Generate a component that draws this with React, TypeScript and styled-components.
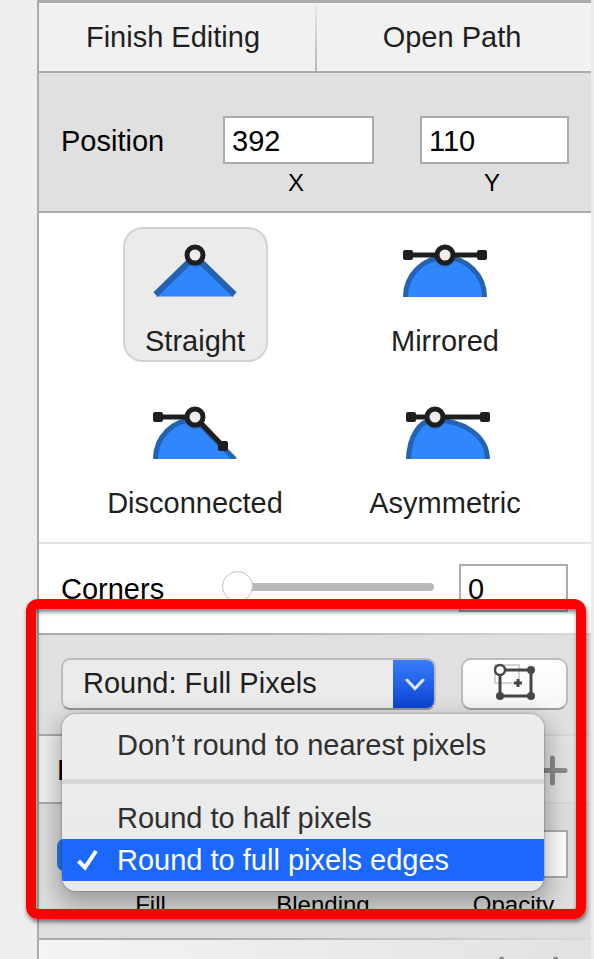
import React, { useState } from 'react';
import styled, { createGlobalStyle } from 'styled-components';

const ink = '#1f1f1f';
const rule = '#ababab';
const gray = '#e0e0e0';

const GlobalStyle = createGlobalStyle`
  *, *::before, *::after { box-sizing: border-box; }
  body {
    margin: 0;
    background: #eeeeee;
    font-family: "Liberation Sans", Arial, Helvetica, sans-serif;
    font-size: 29px;
    line-height: 34px;
    color: #000;
  }
  button, input { font: inherit; color: inherit; }
`;

const Page = styled.div`
  position: relative;
  height: 100vh;
  overflow: hidden;
  display: flex;
  padding-left: 37px;
`;

const Panel = styled.main`
  flex: 1;
  min-width: 0;
  display: flex;
  flex-direction: column;
  border-left: 2px solid ${rule};
  border-right: 3px solid #ebebeb;
`;

const Section = styled.section<{ $bg: string; $line?: string; $fade?: boolean }>`
  flex: none;
  background: ${p => p.$bg};
  border-bottom: 2px solid ${p => p.$line ?? rule};
  ${p => p.$fade && `border-image: linear-gradient(90deg, ${rule} 30%, #dadada) 1;`}
`;

const Tabs = styled(Section)`
  display: grid;
  grid-template-columns: 1fr 1fr;
  border-top: 3px solid ${rule};
`;

const TabButton = styled.button`
  height: 68px;
  padding: 0 8px 0 0;
  border: 0;
  background: none;
  color: ${ink};
  & + & {
    padding: 0 4px 0 0;
    border-left: 2px solid;
    border-image: linear-gradient(#eaeaea, #b4b4b4) 1;
  }
`;

const PositionRow = styled(Section)`
  display: grid;
  grid-template-columns: 162px 151px 149px;
  column-gap: 0;
  justify-content: start;
  padding: 43px 22px 14px;
`;

const RowLabel = styled.label`
  height: 48px;
  padding-top: 2px;
  display: flex;
  align-items: center;
`;

const Field = styled.div<{ $gap?: boolean }>`
  width: ${p => (p.$gap ? '149px' : '151px')};
  margin-left: ${p => (p.$gap ? '46px' : '0')};
  display: flex;
  flex-direction: column;
  align-items: center;
  label {
    font-size: 24px;
    line-height: 28px;
    margin-top: 5px;
    padding-right: 5px;
  }
`;

const TextBox = styled.input`
  width: 100%;
  height: 48px;
  padding: 3px 7px 0;
  background: #fff;
  border: 2px solid ${rule};
  border-radius: 0;
  outline: none;
`;

const PointTypes = styled(Section)`
  display: grid;
  grid-template-columns: 1fr 1fr;
  justify-items: center;
  row-gap: 27px;
  padding: 14px 21px 18px 31px;
`;

const PointType = styled.button<{ $on?: boolean }>`
  min-width: 145px;
  height: 135px;
  display: flex;
  flex-direction: column;
  align-items: center;
  padding: 15px 0 0;
  border: 2px solid ${p => (p.$on ? '#d2d2d2' : 'transparent')};
  border-radius: 20px;
  background: ${p => (p.$on ? '#ebebeb' : 'transparent')};
  color: ${ink};
  svg { flex: none; margin-bottom: 27px; }
`;

const CornersRow = styled(Section)`
  display: flex;
  padding: 20px 23px 21px 22px;
`;

const CornersLabel = styled(RowLabel)`
  width: 161px;
`;

const Slider = styled.input`
  flex: 1;
  min-width: 0;
  height: 46px;
  margin: 0 25px 0 0;
  appearance: none;
  background: none;
  &::-webkit-slider-runnable-track {
    height: 8px;
    border-radius: 4px;
    background: #b9b9b9;
  }
  &::-webkit-slider-thumb {
    appearance: none;
    width: 31px;
    height: 31px;
    margin-top: -12px;
    border-radius: 50%;
    border: 1px solid #c4c4c4;
    background: #fff;
  }
`;

const CornersBox = styled.div`
  width: 109px;
`;

const RoundingRow = styled(Section)`
  position: relative;
  display: flex;
  gap: 25px;
  height: 101px;
  padding: 23px 23px 0 22px;
`;

const Popup = styled.button`
  flex: 1;
  height: 52px;
  display: flex;
  align-items: stretch;
  justify-content: space-between;
  padding: 0;
  overflow: hidden;
  border: 2px solid #bcbcbc;
  border-bottom-color: #969696;
  border-radius: 9px;
  background: #ebebeb;
  color: ${ink};
  span { padding: 6px 20px; white-space: nowrap; }
`;

const PopupArrow = styled.i`
  width: 43px;
  margin: -2px;
  display: grid;
  place-items: center;
  background: linear-gradient(#3a80fb, #0b42d2);
`;

const AlignButton = styled.button`
  width: 107px;
  height: 52px;
  display: grid;
  place-items: center;
  padding: 0 0 6px;
  border: 2px solid #bcbcbc;
  border-bottom-color: #9c9c9c;
  border-radius: 10px;
  background: linear-gradient(#fff, #f6f6f6);
`;

const Menu = styled.div`
  position: absolute;
  z-index: 2;
  top: 79px;
  left: 23px;
  right: 47px;
  overflow: hidden;
  padding: 10px 0;
  border-radius: 14px;
  background: linear-gradient(#ececec, #e8eaea);
  box-shadow: 0 0 2px rgba(0, 0, 0, 0.5), 0 10px 24px 4px rgba(0, 0, 0, 0.3);
`;

const MenuItem = styled.button<{ $on?: boolean }>`
  width: 100%;
  height: 42px;
  display: grid;
  grid-template-columns: 55px 1fr;
  align-items: center;
  padding: 0;
  border: 0;
  background: ${p => (p.$on ? '#1d68fc' : 'none')};
  color: ${p => (p.$on ? '#fff' : '#303030')};
  text-align: left;
  white-space: nowrap;
  svg { justify-self: center; margin-right: 5px; }
`;

const MenuRule = styled.hr`
  height: 5px;
  margin: 13px 0;
  border: 0;
  background: #d5d6d6;
`;

const FillsHeader = styled(Section)`
  height: 68px;
  display: flex;
  align-items: center;
  justify-content: space-between;
  padding: 2px 23px 0 18px;
`;

const AddButton = styled.button`
  display: flex;
  padding: 0;
  border: 0;
  background: none;
`;

const FillRow = styled(Section)`
  height: 136px;
  display: grid;
  grid-template-columns: 187px 158px 1fr;
  grid-template-rows: 46px 28px;
  row-gap: 15px;
  align-content: start;
  justify-items: center;
  padding: 26px 23px 0 18px;
  font-size: 24px;
  line-height: 28px;
`;

const OpacityCell = styled.div`
  width: 109px;
  justify-self: end;
  text-align: center;
`;

const FillToggle = styled.input`
  justify-self: start;
  align-self: start;
  appearance: none;
  width: 30px;
  height: 32px;
  margin: 9px 0 0;
  border-radius: 7px;
  background: #2b7bea;
`;

const Footer = styled.section`
  flex: 1;
  display: flex;
  justify-content: flex-end;
  gap: 23px;
  padding: 16px 20px 0 0;
  background: linear-gradient(90deg, #f4f4f4, #e2e2e2);
`;

const Callout = styled.div`
  position: absolute;
  z-index: 3;
  top: 599px;
  left: 26px;
  right: 8px;
  height: 320px;
  border: 10px solid #fe0000;
  border-radius: 12px;
  box-shadow: 1px 3px 4px rgba(0, 0, 0, 0.5), inset 1px 3px 4px rgba(0, 0, 0, 0.5);
  pointer-events: none;
`;

const fill = '#3086fd';
const edge = '#2463b2';
const dark = '#1e1e1e';

const Anchor = ({ x }: { x: number }) => (
  <>
    <circle cx={x} cy="13" r="10" fill="#000" opacity="0.2" />
    <circle cx={x} cy="11" r="8" fill="#ededed" stroke={dark} strokeWidth="5" />
  </>
);

const Handle = ({ x, y = 11 }: { x: number; y?: number }) => (
  <rect x={x - 5} y={y - 5} width="10" height="10" rx="2" fill={dark} />
);

const StraightIcon = () => (
  <svg width="84" height="53" viewBox="0 0 84 53" aria-hidden="true">
    <path d="M3 52.5L42 14L81 52.5Z" fill={fill} />
    <path d="M2.500 50.500L42 12L81.500 50.500" fill="none" stroke={edge} strokeWidth="6" />
    <Anchor x={42} />
  </svg>
);

const MirroredIcon = () => (
  <svg width="84" height="53" viewBox="0 0 84 53" aria-hidden="true">
    <path d="M2.500 53A39.500 39.500 0 0 1 81.500 53" fill={fill} stroke={edge} strokeWidth="5" />
    <path d="M5 11H79" stroke={dark} strokeWidth="5" />
    <Handle x={5} />
    <Handle x={79} />
    <Anchor x={42} />
  </svg>
);

const DisconnectedIcon = () => (
  <svg width="84" height="53" viewBox="0 0 84 53" aria-hidden="true">
    <path d="M2.500 53C2.500 31 20 13.500 42 13.500L81 53Z" fill={fill} />
    <path d="M2.500 53C2.500 31 20 13.500 42 13.500L82 53.500" fill="none" stroke={edge} strokeWidth="5" />
    <path d="M5 11H42L70 40" fill="none" stroke={dark} strokeWidth="5" />
    <Handle x={5} />
    <Handle x={70} y={40} />
    <Anchor x={42} />
  </svg>
);

const AsymmetricIcon = () => (
  <svg width="90" height="53" viewBox="-6 0 90 53" aria-hidden="true">
    <path d="M2.500 53C3 32 13 14 28 14C56 14 81 29 81.500 53" fill={fill} stroke={edge} strokeWidth="5" />
    <path d="M5 11H79" stroke={dark} strokeWidth="5" />
    <Handle x={5} />
    <Handle x={79} />
    <Anchor x={29} />
  </svg>
);

const PlusIcon = () => (
  <svg width="31" height="31" viewBox="0 0 31 31" stroke="#8b8b8b" strokeWidth="5" strokeLinecap="round" aria-hidden="true">
    <path d="M15.500 3V28M3 15.500H28" />
  </svg>
);

const pointTypes = [
  { name: 'Straight', Icon: StraightIcon },
  { name: 'Mirrored', Icon: MirroredIcon },
  { name: 'Disconnected', Icon: DisconnectedIcon },
  { name: 'Asymmetric', Icon: AsymmetricIcon },
];

const roundings = ['Don’t round to nearest pixels', 'Round to half pixels', 'Round to full pixels edges'];

export default function App() {
  const [point, setPoint] = useState('Straight');
  const [rounding, setRounding] = useState(2);

  return (
    <Page>
      <GlobalStyle />
      <Panel>
        <Tabs $bg="#f1f1f1">
          <TabButton>Finish Editing</TabButton>
          <TabButton>Open Path</TabButton>
        </Tabs>

        <PositionRow $bg={gray}>
          <RowLabel htmlFor="pos-x">Position</RowLabel>
          <Field>
            <TextBox id="pos-x" defaultValue="392" />
            <label htmlFor="pos-x">X</label>
          </Field>
          <Field $gap>
            <TextBox id="pos-y" defaultValue="110" />
            <label htmlFor="pos-y">Y</label>
          </Field>
        </PositionRow>

        <PointTypes $bg="#fff" $line="#e2e2e2">
          {pointTypes.map(({ name, Icon }) => (
            <PointType key={name} $on={name === point} onClick={() => setPoint(name)}>
              <Icon />
              {name}
            </PointType>
          ))}
        </PointTypes>

        <CornersRow $bg="#fff" $fade>
          <CornersLabel htmlFor="corners">Corners</CornersLabel>
          <Slider type="range" aria-label="Corner radius" defaultValue={0} />
          <CornersBox>
            <TextBox id="corners" defaultValue="0" />
          </CornersBox>
        </CornersRow>

        <RoundingRow $bg={gray} $fade>
          <Popup aria-haspopup="menu" aria-expanded="true">
            <span>Round: Full Pixels</span>
            <PopupArrow>
              <svg width="20" height="13" viewBox="0 0 20 13" fill="none" stroke="#dce8ff" strokeWidth="3" strokeLinecap="round">
                <path d="M2 2L10 10.500L18 2" />
              </svg>
            </PopupArrow>
          </Popup>
          <AlignButton aria-label="Align to pixels">
            <svg width="42" height="37" viewBox="0 0 42 37" fill="none" aria-hidden="true">
              <path d="M1 2H25V20H1Z" stroke="#d3d3d3" strokeWidth="2" />
              <path d="M6 7H37V33H6Z" stroke="#464646" strokeWidth="3" />
              <g fill="#464646">
                <circle cx="37" cy="7" r="4" />
                <circle cx="37" cy="33" r="4" />
                <circle cx="6" cy="33" r="4" />
              </g>
              <path d="M24 16V24M20 20H28" stroke="#464646" strokeWidth="3" />
              <circle cx="6" cy="7" r="5" fill="#fff" stroke="#464646" strokeWidth="2.500" />
            </svg>
          </AlignButton>
          <Menu role="menu">
            {roundings.map((text, i) => (
              <React.Fragment key={text}>
                <MenuItem role="menuitemradio" aria-checked={i === rounding} $on={i === rounding} onClick={() => setRounding(i)}>
                  {i === rounding ? (
                    <svg width="21" height="22" viewBox="0 0 21 22" fill="none" stroke="#fff" strokeWidth="4">
                      <path d="M1.500 12L8 18.500L19 2" />
                    </svg>
                  ) : (
                    <i />
                  )}
                  {text}
                </MenuItem>
                {i === 0 && <MenuRule />}
              </React.Fragment>
            ))}
          </Menu>
        </RoundingRow>

        <FillsHeader $bg="linear-gradient(90deg, #f1f1f1, #e2e2e2)" $fade>
          Fills
          <AddButton aria-label="Add fill">
            <PlusIcon />
          </AddButton>
        </FillsHeader>

        <FillRow $bg="#dedede" $fade>
          <FillToggle type="checkbox" id="fill" defaultChecked />
          <i />
          <OpacityCell>
            <TextBox id="opacity" />
          </OpacityCell>
          <label htmlFor="fill">Fill</label>
          <span>Blending</span>
          <OpacityCell>
            <label htmlFor="opacity">Opacity</label>
          </OpacityCell>
        </FillRow>

        <Footer>
          <AddButton aria-label="Border options">
            <PlusIcon />
          </AddButton>
          <AddButton aria-label="Add border">
            <PlusIcon />
          </AddButton>
        </Footer>
      </Panel>
      <Callout />
    </Page>
  );
}
